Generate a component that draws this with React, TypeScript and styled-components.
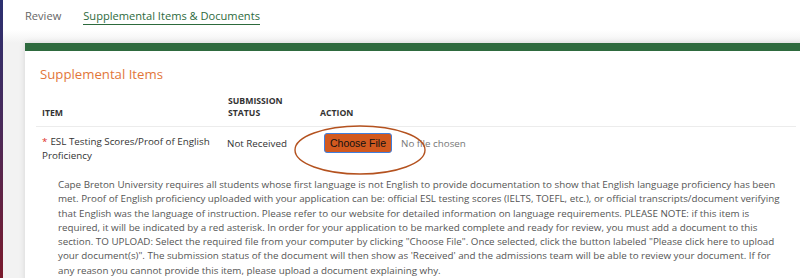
import styled, { createGlobalStyle } from "styled-components";

const GlobalStyle = createGlobalStyle`
  html, body {
    margin: 0;
    padding: 0;
    background: #ffffff;
    font-family: "Open Sans", "Noto Sans", sans-serif;
    overflow: hidden;
  }
`;

const Page = styled.div`
  display: flex;
  width: 800px;
  height: 278px;
  overflow: hidden;
`;

const EdgeStrip = styled.div`
  width: 3px;
  flex-shrink: 0;
  background: linear-gradient(180deg, #2b3070 0%, #4a2a5a 45%, #7a1a2c 100%);
`;

const Main = styled.div`
  flex: 1;
  padding-left: 22px;
  background: linear-gradient(180deg, #ffffff 0px, #ffffff 30px, #f2f2f2 43px);
`;

const Tabs = styled.div`
  display: flex;
  gap: 22px;
  height: 43px;
  align-items: flex-start;
  padding-top: 8px;
  box-sizing: border-box;
`;

const Tab = styled.div<{ $active?: boolean }>`
  font-size: 11.1px;
  line-height: 16px;
  color: ${(p) => (p.$active ? "#2d6a3d" : "#666666")};
  border-bottom: 1.5px solid ${(p) => (p.$active ? "#2d6a3d" : "transparent")};
`;

const Card = styled.div`
  width: 790px;
  background: #ffffff;
  border-top: 8px solid #2e6a3e;
  box-shadow: 0 0 6px rgba(0, 0, 0, 0.12);
  padding: 13px 0 0 11px;
  box-sizing: border-box;
  height: 240px;
`;

const Title = styled.h2`
  margin: 0 0 0 4px;
  font-size: 13.2px;
  font-weight: 400;
  color: #e2763a;
  line-height: 20px;
`;

const Table = styled.div`
  position: relative;
  width: 760px;
  margin-top: 11px;
`;

const Row = styled.div<{ $head?: boolean }>`
  display: grid;
  grid-template-columns: 186px 92px 1fr;
  align-items: ${(p) => (p.$head ? "end" : "start")};
  border-bottom: ${(p) => (p.$head ? "1px solid #ececec" : "none")};
  padding: ${(p) => (p.$head ? "0 0 7px" : "8px 0 0")};
`;

const HeadCell = styled.div`
  padding-left: 6px;
  font-size: 8.7px;
  font-weight: 700;
  line-height: 12px;
  color: #333333;
  text-transform: uppercase;
`;

const Cell = styled.div`
  padding-left: 6px;
  font-size: 9.8px;
  line-height: 14px;
  color: #333333;
`;

const Required = styled.span`
  color: #e0302a;
  margin-right: 3px;
`;

const Status = styled(Cell)`
  padding-top: 2px;
  padding-left: 5px;
`;

const FilePicker = styled.div`
  display: flex;
  align-items: center;
  gap: 9px;
  padding-left: 10px;
  margin-top: -2px;
`;

const FileButton = styled.button`
  width: 68px;
  height: 20px;
  padding: 0;
  background: #d2591f;
  border: 1.5px solid #3f7fe0;
  border-radius: 3px;
  font-family: "Liberation Sans", Arial, sans-serif;
  font-size: 10.5px;
  color: #111111;
`;

const NoFile = styled.span`
  font-size: 9.8px;
  color: #777777;
`;

const Circle = styled.svg`
  position: absolute;
  left: 257px;
  top: 30px;
  pointer-events: none;
`;

const Description = styled.p`
  margin: 15px 0 0 22px;
  width: 722px;
  font-size: 9.8px;
  line-height: 14.3px;
  color: #555555;
`;

export default function App() {
  return (
    <>
      <GlobalStyle />
      <Page>
        <EdgeStrip />
        <Main>
          <Tabs>
            <Tab>Review</Tab>
            <Tab $active>Supplemental Items &amp; Documents</Tab>
          </Tabs>
          <Card>
            <Title>Supplemental Items</Title>
            <Table>
              <Row $head>
                <HeadCell>Item</HeadCell>
                <HeadCell>
                  Submission
                  <br />
                  Status
                </HeadCell>
                <HeadCell>Action</HeadCell>
              </Row>
              <Row>
                <Cell>
                  <Required>*</Required>ESL Testing Scores/Proof of English Proficiency
                </Cell>
                <Status>Not Received</Status>
                <FilePicker>
                  <FileButton>Choose File</FileButton>
                  <NoFile>No file chosen</NoFile>
                </FilePicker>
              </Row>
              <Circle width="134" height="50" viewBox="0 0 134 50">
                <ellipse cx="67" cy="25" rx="65" ry="24" fill="none" stroke="#b4521f" strokeWidth="1.4" />
              </Circle>
            </Table>
            <Description>
              Cape Breton University requires all students whose first language is not English to provide documentation to show that English language proficiency has been met. Proof of English proficiency uploaded with your application can be: official ESL testing scores (IELTS, TOEFL, etc.), or official transcripts/document verifying that English was the language of instruction. Please refer to our website for detailed information on language requirements. PLEASE NOTE: if this item is required, it will be indicated by a red asterisk. In order for your application to be marked complete and ready for review, you must add a document to this section. TO UPLOAD: Select the required file from your computer by clicking "Choose File". Once selected, click the button labeled "Please click here to upload your document(s)". The submission status of the document will then show as 'Received' and the admissions team will be able to review your document. If for any reason you cannot provide this item, please upload a document explaining why.
            </Description>
          </Card>
        </Main>
      </Page>
    </>
  );
}
